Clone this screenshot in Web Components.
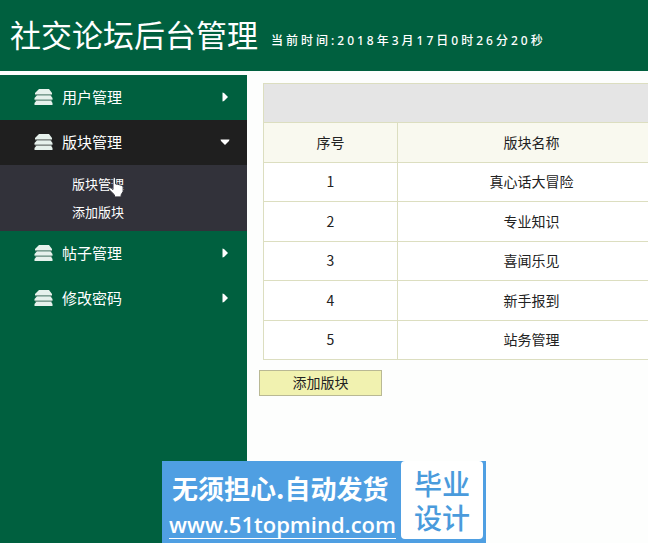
<!DOCTYPE html>
<html lang="zh-CN">
<head>
<meta charset="utf-8">
<title>社交论坛后台管理</title>
<style>
  :root {
    --green: #00603f;
    --line: #dcdec0;
  }
  body {
    margin: 0;
    background: #fdfefd;
    color: #222;
    font: 14px/20px "Noto Sans CJK SC", sans-serif;
  }
</style>
</head>
<body>
<forum-admin>
  <admin-header slot="header" heading="社交论坛后台管理">当前时间:2018年3月17日0时26分20秒</admin-header>
  <admin-menu slot="menu">
    <menu-group label="用户管理"></menu-group>
    <menu-group label="版块管理" open>
      <a href="#boards">版块管理</a>
      <a href="#add">添加版块</a>
    </menu-group>
    <menu-group label="帖子管理"></menu-group>
    <menu-group label="修改密码"></menu-group>
  </admin-menu>
  <board-table></board-table>
  <add-button>添加版块</add-button>
</forum-admin>
<promo-banner></promo-banner>
<hand-cursor></hand-cursor>

<script>
(function () {
  'use strict';

  class ForumAdmin extends HTMLElement {
    constructor() {
      super();
      this.attachShadow({ mode: 'open' }).innerHTML = `
        <style>
          :host {
            display: flex;
            flex-direction: column;
            min-height: 100vh;
          }

          .body {
            display: flex;
            flex: 1;
            margin-top: 4px;
          }

          main {
            flex: 1;
            min-width: 0;
            overflow: hidden;
            padding: 8px 0 0 12px;
          }
        </style>
        <slot name="header"></slot>
        <div class="body">
          <slot name="menu"></slot>
          <main><slot></slot></main>
        </div>
      `;
    }
  }

  class AdminHeader extends HTMLElement {
    constructor() {
      super();
      this.attachShadow({ mode: 'open' });
    }

    connectedCallback() {
      this.shadowRoot.innerHTML = `
        <style>
          :host {
            display: block;
            background: var(--green);
            color: #fff;
          }

          header {
            display: flex;
            align-items: center;
            gap: 13px;
            padding: 14px 10px 17px;
            white-space: nowrap;
          }

          h1 {
            margin: 0;
            font-size: 31px;
            line-height: 40px;
            font-weight: 400;
          }

          .clock {
            padding-top: 14px;
            font: 500 12px/20px "Noto Sans", "Noto Sans CJK SC", sans-serif;
            letter-spacing: 3px;
          }
        </style>
        <header>
          <h1>${this.getAttribute('heading')}</h1>
          <div class="clock"><slot></slot></div>
        </header>
      `;
    }
  }

  class AdminMenu extends HTMLElement {
    constructor() {
      super();
      this.attachShadow({ mode: 'open' }).innerHTML = `
        <style>
          :host {
            display: block;
            flex: 0 0 247px;
            background: var(--green);
            color: #fff;
          }
        </style>
        <nav><slot></slot></nav>
      `;
    }
  }

  class MenuGroup extends HTMLElement {
    constructor() {
      super();
      this.attachShadow({ mode: 'open' });
    }

    connectedCallback() {
      this.render();
      this.shadowRoot.querySelector('button').addEventListener('click', () => this.toggle());
    }

    render() {
      this.shadowRoot.innerHTML = `
        <style>
          :host {
            display: block;
          }

          button {
            display: flex;
            align-items: center;
            width: 100%;
            height: 45px;
            padding: 0 17px 2px 34px;
            border: 0;
            background: none;
            color: inherit;
            font: inherit;
            font-size: 15px;
            text-align: left;
            cursor: pointer;
          }

          .label {
            flex: 1;
            margin-left: 9px;
          }

          .stack {
            width: 19px;
            height: 18px;
            fill: #e6f1ec;
          }

          .arrow {
            width: 10px;
            height: 10px;
            fill: #fff;
          }

          :host([open]) button {
            background: #1f1f1f;
          }

          :host([open]) .arrow {
            transform: rotate(90deg);
          }

          .sub {
            display: none;
            flex-direction: column;
            padding: 5px 0 5px 72px;
            background: #32323a;
          }

          :host([open]) .sub {
            display: flex;
          }

          ::slotted(a) {
            color: #fff;
            font-size: 13px;
            line-height: 28px;
            text-decoration: none;
          }
        </style>
        <button type="button">
          <svg class="stack" viewBox="0 0 19 18" aria-hidden="true">
            <path d="M5 1h10l3 4v1.500H1V5z"/>
            <path d="M3 7.200h13.500L18.500 10v1.700H.5V10z"/>
            <path d="M2.500 12.500h14.500L18.500 15v2H.5v-2z"/>
            <path fill="#8d9793" d="M1 6.400h17v.8H1zM1 11.700h17v.8H1z"/>
          </svg>
          <span class="label">${this.getAttribute('label')}</span>
          <svg class="arrow" viewBox="0 0 10 10" aria-hidden="true"><path d="M2.500.5L4 1l4 4-4 4-1.500.5z"/></svg>
        </button>
        <div class="sub"><slot></slot></div>
      `;
    }

    toggle() {
      this.toggleAttribute('open');
    }
  }

  class BoardTable extends HTMLElement {
    constructor() {
      super();
      this.attachShadow({ mode: 'open' });
      this.boards = ['真心话大冒险', '专业知识', '喜闻乐见', '新手报到', '站务管理'];
    }

    connectedCallback() {
      this.shadowRoot.innerHTML = `
        <style>
          :host {
            display: block;
            padding-left: 4px;
          }

          table {
            width: 100%;
            min-width: 403px;
            border-collapse: collapse;
            table-layout: fixed;
            text-align: center;
            background: #fff;
          }

          .no {
            width: 33.33%;
          }

          tr {
            height: 39px;
          }

          .head,
          tbody tr:nth-child(even) {
            height: 40px;
          }

          th,
          td {
            padding: 0 0 2px;
            border: 1px solid var(--line);
            font-weight: 400;
          }

          .bar th {
            background: #e5e5e5;
          }

          .head th {
            background: #f9f9ef;
          }
        </style>
        <table>
          <colgroup><col class="no"><col></colgroup>
          <thead>
            <tr class="bar"><th colspan="2"></th></tr>
            <tr class="head"><th scope="col">序号</th><th scope="col">版块名称</th></tr>
          </thead>
          <tbody>
            ${this.boards.map((name, i) => `<tr><td>${i + 1}</td><td>${name}</td></tr>`).join('')}
          </tbody>
        </table>
      `;
    }
  }

  class AddButton extends HTMLElement {
    constructor() {
      super();
      this.attachShadow({ mode: 'open' }).innerHTML = `
        <style>
          :host {
            display: block;
            margin-top: 10px;
          }

          button {
            width: 123px;
            height: 26px;
            padding: 0 0 2px;
            border: 1px solid #b9b994;
            background: #f1f2b0;
            color: #222;
            font: inherit;
            cursor: pointer;
          }
        </style>
        <button type="button"><slot></slot></button>
      `;
    }
  }

  class PromoBanner extends HTMLElement {
    constructor() {
      super();
      this.attachShadow({ mode: 'open' }).innerHTML = `
        <style>
          :host {
            position: fixed;
            left: 25%;
            bottom: 0;
            display: flex;
            width: 324px;
            height: 82px;
            background: #4f9fe2;
            color: #fff;
            white-space: nowrap;
          }

          .text {
            flex: 1;
            min-width: 0;
            padding: 8px 0 0 7px;
          }

          .slogan {
            padding-left: 3px;
            font-size: 26px;
            line-height: 38px;
            font-weight: 700;
          }

          a {
            display: inline-block;
            color: inherit;
            font: 600 22px/34px "Open Sans", "Noto Sans", sans-serif;
            text-decoration: underline 1px;
            text-underline-offset: 5px;
          }

          .badge {
            width: 82px;
            height: 78px;
            margin-right: 3px;
            padding-top: 5px;
            box-sizing: border-box;
            border-radius: 4px;
            background: #fff;
            color: #4a9bdc;
            font-size: 28px;
            line-height: 34px;
            font-weight: 500;
            text-align: center;
          }
        </style>
        <div class="text">
          <div class="slogan">无须担心.自动发货</div>
          <a href="#promo">www.51topmind.com</a>
        </div>
        <div class="badge">毕业<br>设计</div>
      `;
    }
  }

  class HandCursor extends HTMLElement {
    constructor() {
      super();
      this.attachShadow({ mode: 'open' }).innerHTML = `
        <style>
          :host {
            position: absolute;
            left: 108px;
            top: 177px;
            pointer-events: none;
          }

          svg {
            display: block;
            width: 17px;
            height: 21px;
          }
        </style>
        <svg viewBox="0 0 17 21" aria-hidden="true">
          <path fill="#fff" stroke="#32323a" stroke-width="1" d="M5 2q0-1.500 1.300-1.500T7.600 2v5l2 .3 2 .5 2 .6 1.500 1v5l-2 3.500v2H6.500v-2L1 12.500q-1-1.800.5-2 1.500 0 3.500 2z"/>
        </svg>
      `;
    }
  }

  customElements.define('forum-admin', ForumAdmin);
  customElements.define('admin-header', AdminHeader);
  customElements.define('admin-menu', AdminMenu);
  customElements.define('menu-group', MenuGroup);
  customElements.define('board-table', BoardTable);
  customElements.define('add-button', AddButton);
  customElements.define('promo-banner', PromoBanner);
  customElements.define('hand-cursor', HandCursor);
})();
</script>
</body>
</html>
